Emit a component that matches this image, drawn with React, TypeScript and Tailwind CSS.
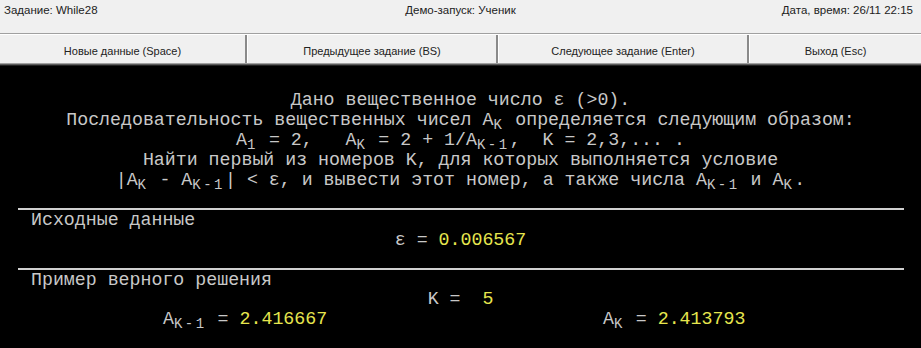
const mono = "font-['Liberation_Mono','Courier_New',monospace]";

function S({ children }: { children: React.ReactNode }) {
  return <sub className="text-[14px] tracking-[2.5px]">{children}</sub>;
}

function Y({ children }: { children: React.ReactNode }) {
  return <span className="text-[#e6e64e]">{children}</span>;
}

const buttons = [
  { label: "Новые данные (Space)", w: "w-[247px]" },
  { label: "Предыдущее задание (BS)", w: "w-[251px]" },
  { label: "Следующее задание (Enter)", w: "w-[251px]" },
  { label: "Выход (Esc)", w: "flex-1" },
];

export default function App() {
  return (
    <div className="w-[921px] h-[348px] flex flex-col bg-black overflow-hidden">
      {/* Status bar */}
      <div className="h-[33px] bg-[#f0f0f0] grid grid-cols-3 items-start pt-[3px] px-[4px] text-[11.5px] leading-[14px] text-[#222] font-['Liberation_Sans',Arial,sans-serif]">
        <span>Задание: While28</span>
        <span className="text-center">Демо-запуск: Ученик</span>
        <span className="text-right pr-[4px]">Дата, время: 26/11 22:15</span>
      </div>

      {/* Button row */}
      <div className="h-px bg-[#a0a0a0]" />
      <div className="h-px bg-white" />
      <div className="h-[28px] flex bg-[#f0f0f0] text-[11px] text-[#222] font-['Liberation_Sans',Arial,sans-serif]">
        {buttons.map((b, i) => (
          <div
            key={b.label}
            className={`${b.w} flex items-center justify-center pt-[4px] ${
              i < 3 ? "border-r-2 border-r-[#8a8a8a]" : ""
            } ${i > 0 ? "border-l border-l-white" : ""}`}
          >
            {b.label}
          </div>
        ))}
      </div>
      <div className="h-px bg-[#a0a0a0]" />
      <div className="h-px bg-[#5a5a5a]" />
      <div className="h-px bg-[#222]" />

      {/* Task area */}
      <div className={`flex-1 flex flex-col text-[18.25px] leading-[20px] text-[#c8c8c8] whitespace-pre ${mono}`}>
        <div className="pt-[24px] flex flex-col items-center">
          <div>Дано вещественное число ε (&gt;0).</div>
          <div>
            Последовательность вещественных чисел A<S>K</S> определяется следующим образом:
          </div>
          <div>
            A<S>1</S> = 2,   A<S>K</S> = 2 + 1/A<S>K-1</S>,  K = 2,3,... .
          </div>
          <div>Найти первый из номеров K, для которых выполняется условие</div>
          <div>
            |A<S>K</S> - A<S>K-1</S>| &lt; ε, и вывести этот номер, а также числа A<S>K-1</S> и A<S>K</S>.
          </div>
        </div>

        <div className="mt-[18px] ml-[18px] w-[886px] h-[2px] bg-[#d0d0d0]" />
        <div className="pl-[31px]">Исходные данные</div>
        <div className="text-center">
          ε = <Y>0.006567</Y>
        </div>

        <div className="mt-[18px] ml-[18px] w-[886px] h-[2px] bg-[#d0d0d0]" />
        <div className="pl-[31px]">Пример верного решения</div>
        <div className="text-center -mt-[1px]">
          K =  <Y>5</Y>
        </div>
        <div className="grid grid-cols-[603px_1fr]">
          <div className="pl-[163px]">
            A<S>K-1</S> = <Y>2.416667</Y>
          </div>
          <div>
            A<S>K</S> = <Y>2.413793</Y>
          </div>
        </div>
      </div>
    </div>
  );
}
